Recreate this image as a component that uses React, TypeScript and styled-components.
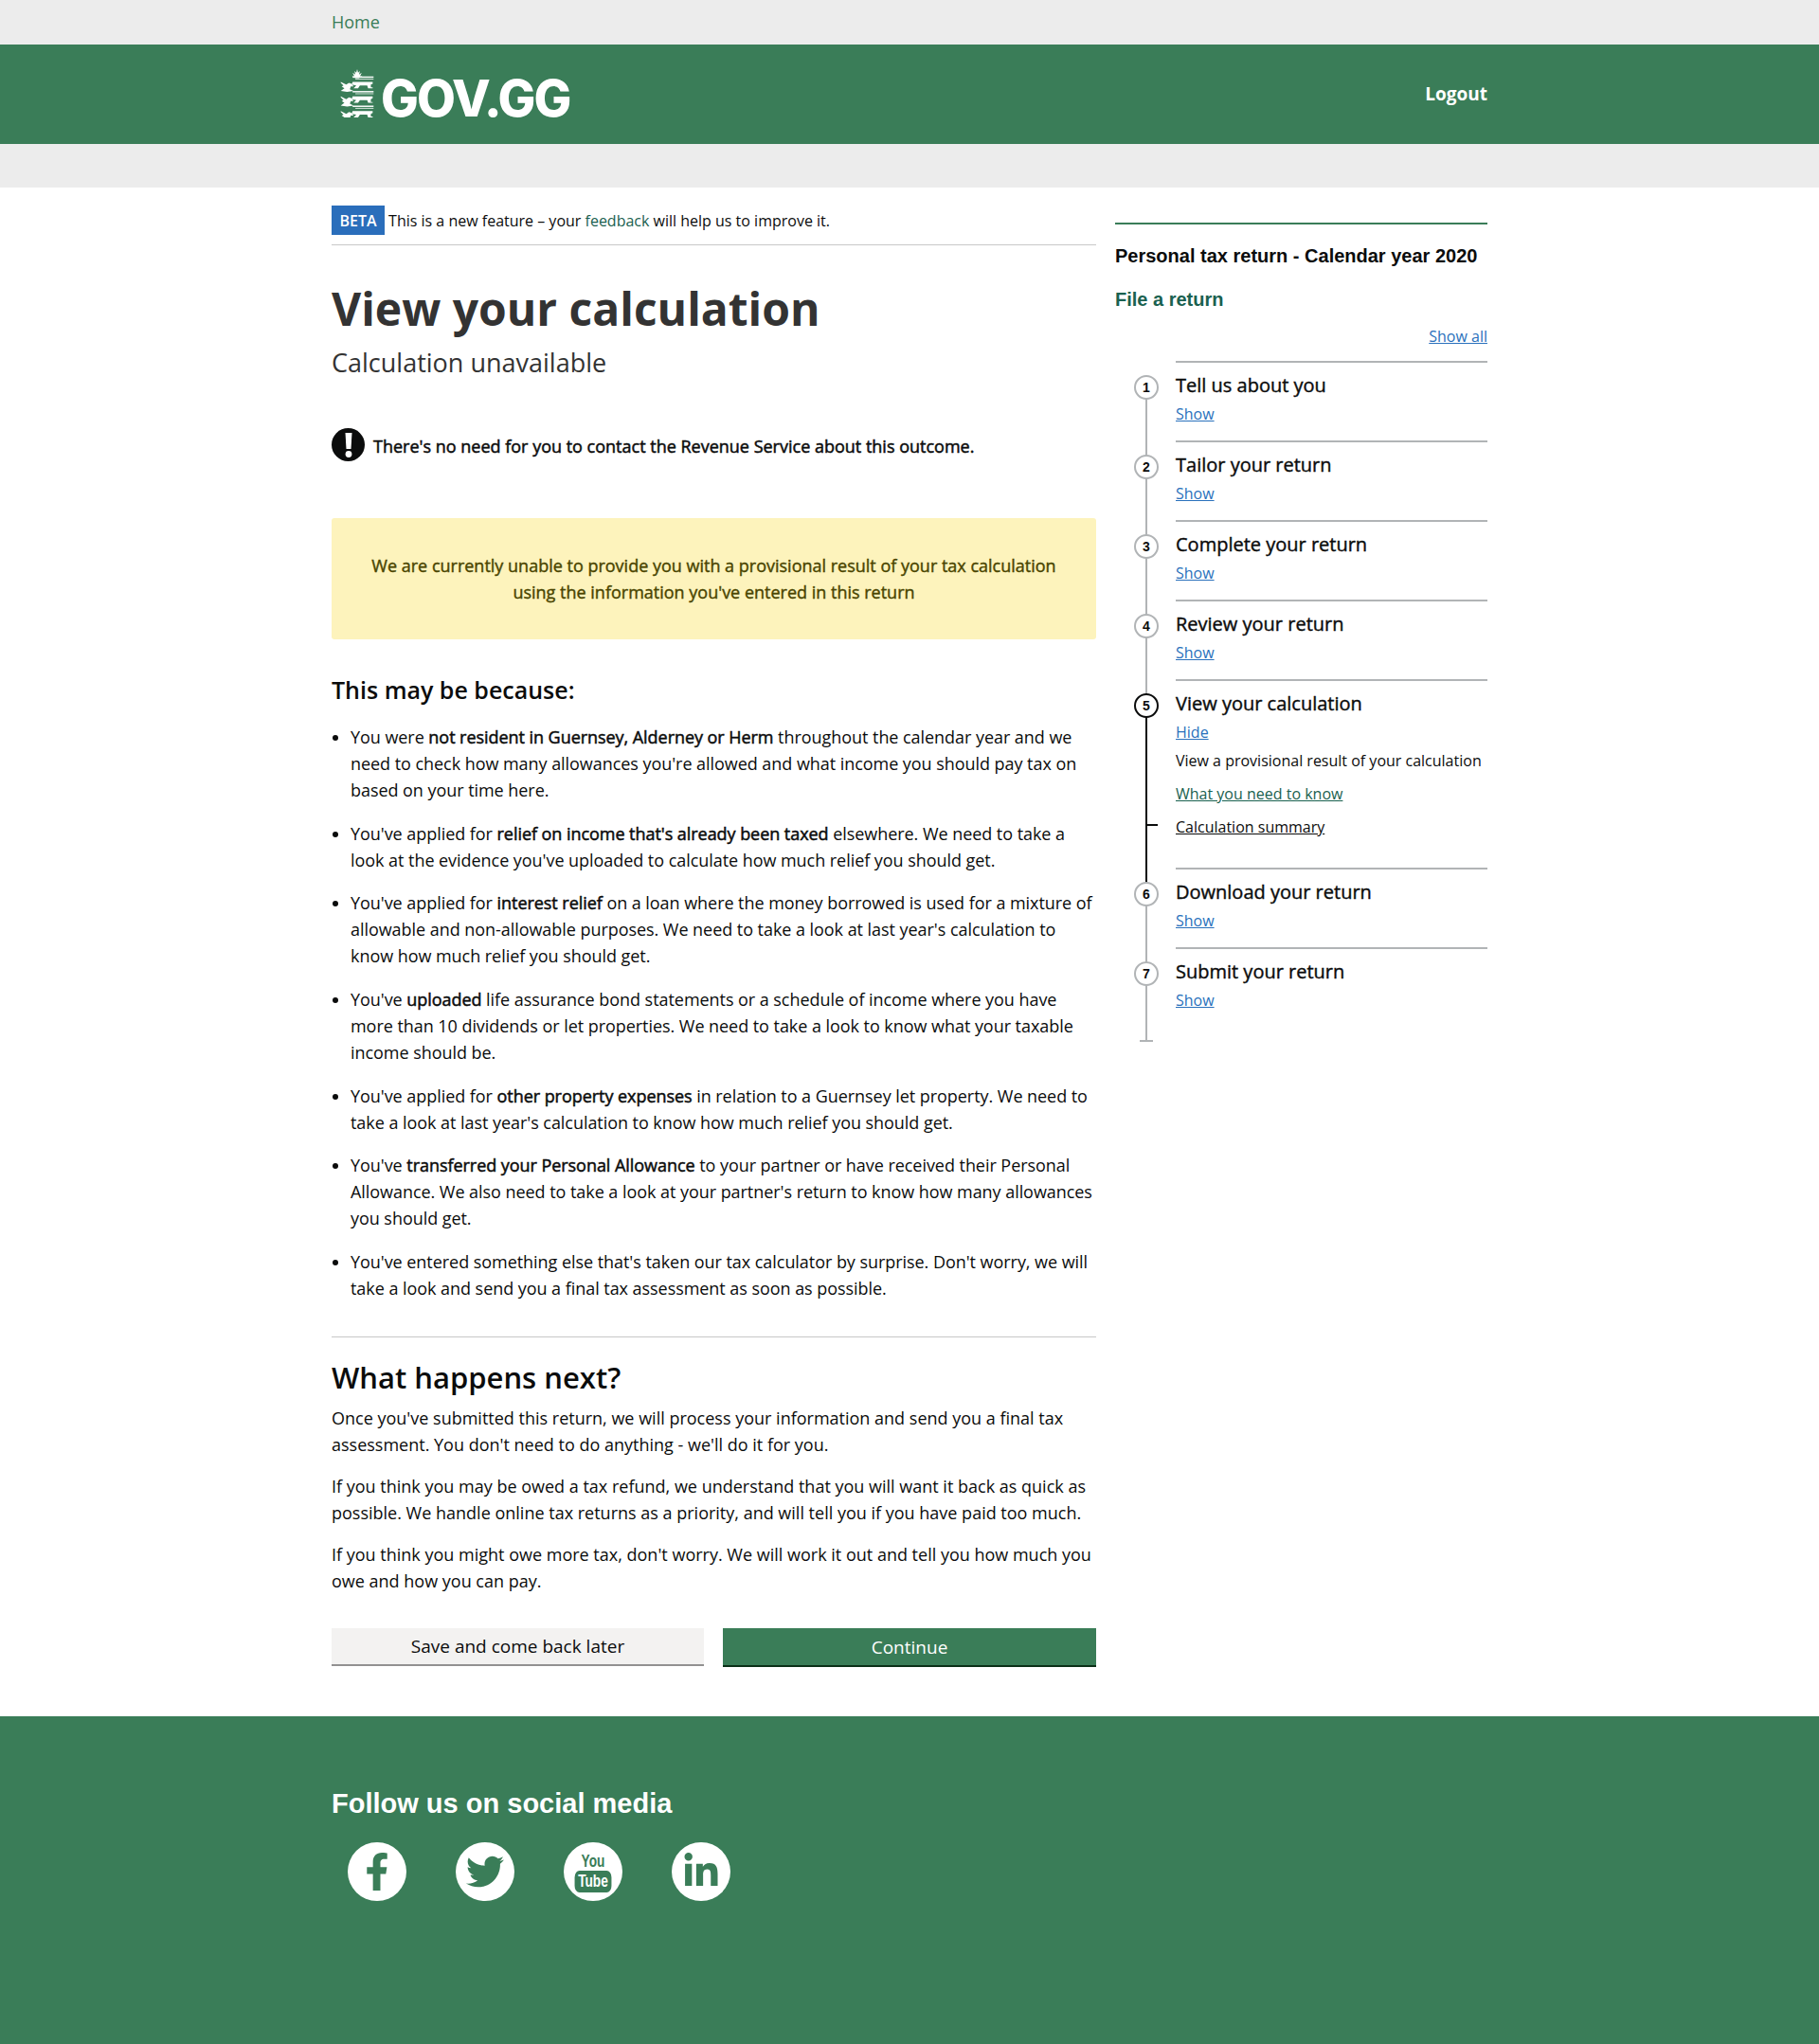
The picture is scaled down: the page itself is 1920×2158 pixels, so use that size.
import styled, { createGlobalStyle } from "styled-components";
import { FaFacebookF, FaTwitter, FaLinkedinIn } from "react-icons/fa";

const GlobalStyle = createGlobalStyle`
  * {
    box-sizing: border-box;
  }
  body {
    margin: 0;
    background: #fff;
    color: #0b0c0c;
    font-family: "Open Sans", "Liberation Sans", sans-serif;
    font-size: 18px;
    line-height: 28px;
  }
`;

const GREEN = "#3a7d58";
const LINK_BLUE = "#2a71bc";
const DARK_GREEN = "#1a6150";

const Container = styled.div`
  width: 1220px;
  margin: 0 auto;
`;

const TopBar = styled.div`
  height: 47px;
  background: #ececec;
  display: flex;
  align-items: center;
  padding-bottom: 2px;
`;

const HomeLink = styled.a`
  color: ${GREEN};
  font-size: 18px;
`;

const Masthead = styled.header`
  height: 105px;
  background: ${GREEN};
`;

const MastheadInner = styled(Container)`
  height: 100%;
  display: flex;
  justify-content: space-between;
  align-items: center;
`;

const Logo = styled.div`
  display: flex;
  align-items: flex-end;
  gap: 6px;
  padding: 0 0 3px 8px;
`;

const LogoText = styled.span`
  color: #fff;
  font-family: Inter, "Liberation Sans", sans-serif;
  font-weight: 800;
  font-size: 53px;
  line-height: 40px;
  letter-spacing: -1.8px;
`;

const Logout = styled.a`
  color: #fff;
  font-weight: 700;
  font-size: 19px;
  margin-bottom: 2px;
`;

const SubBar = styled.div`
  height: 46px;
  background: #ececec;
`;

const Layout = styled(Container)`
  display: grid;
  grid-template-columns: 807px 393px;
  gap: 20px;
  padding-top: 19px;
`;

const Main = styled.main`
  padding-bottom: 52px;
`;

const BetaBanner = styled.div`
  display: flex;
  align-items: center;
  gap: 4px;
  height: 42px;
  padding-bottom: 10px;
  border-bottom: 1px solid #c8c8c8;
  font-size: 16px;
`;

const BetaTag = styled.strong`
  background: #2a6ebb;
  color: #fff;
  font-weight: 600;
  font-size: 16px;
  line-height: 31px;
  padding: 1px 8.5px 0;
  height: 31px;
`;

const GreenLink = styled.a`
  color: ${DARK_GREEN};
`;

const Title = styled.h1`
  margin: 34px 0 0;
  color: #333;
  font-size: 48px;
  line-height: 66px;
  font-weight: 700;
`;

const Subtitle = styled.p`
  margin: 5px 0 0;
  color: #333;
  font-size: 27px;
  line-height: 38px;
`;

const Notice = styled.div`
  display: flex;
  align-items: center;
  gap: 9px;
  margin-top: 50px;
  -webkit-text-stroke: 0.5px #0b0c0c;
`;

const NoticeIcon = styled.span`
  width: 35px;
  height: 35px;
  border-radius: 50%;
  background: #0b0c0c;
  color: #fff;
  display: flex;
  align-items: center;
  justify-content: center;
  flex: none;
`;

const NoticeText = styled.span`
  position: relative;
  top: 1px;
`;

const Callout = styled.div`
  margin-top: 60px;
  padding: 36px 20px;
  background: #fdf3bc;
  color: #4a4500;
  text-align: center;
  -webkit-text-stroke: 0.4px #4a4500;
  border-radius: 3px;
`;

const SectionHeading = styled.h2`
  margin: 35px 0 0;
  font-size: 25px;
  line-height: 36px;
  font-weight: 600;
`;

const ReasonList = styled.ul`
  list-style: none;
  margin: 18px 0 0;
  padding: 0;
  padding-bottom: 37px;
  border-bottom: 1px solid #c8c8c8;
`;

const Reason = styled.li`
  position: relative;
  padding-left: 20px;
  margin-bottom: 17.7px;
  letter-spacing: -0.05px;

  &:last-child {
    margin-bottom: 0;
  }

  &::before {
    content: "";
    position: absolute;
    left: 1px;
    top: 12px;
    width: 6px;
    height: 6px;
    border-radius: 50%;
    background: #0b0c0c;
  }

  strong {
    font-weight: 400;
    -webkit-text-stroke: 0.5px #0b0c0c;
  }
`;

const NextHeading = styled.h2`
  margin: 21px 0 0;
  font-size: 31px;
  line-height: 42px;
  font-weight: 600;
`;

const Para = styled.p`
  margin: 8px 0 16px;
`;

const Actions = styled.div`
  display: grid;
  grid-template-columns: 393px 394px;
  gap: 20px;
  margin-top: 36px;
  align-items: start;
`;

const Button = styled.button<{ $primary?: boolean }>`
  height: ${(p) => (p.$primary ? "41px" : "40px")};
  border: 0;
  border-bottom: ${(p) => (p.$primary ? "2px solid #0b3018" : "2px solid #929191")};
  background: ${(p) => (p.$primary ? GREEN : "#f3f2f1")};
  color: ${(p) => (p.$primary ? "#fff" : "#0b0c0c")};
  font-family: inherit;
  font-size: 19px;
  padding: 0;
`;

const Side = styled.aside`
  padding-top: 18px;
`;

const SideHeader = styled.div`
  border-top: 2px solid ${GREEN};
  padding-top: 19px;
  font-family: "Liberation Sans", sans-serif;
  font-weight: 700;
`;

const SideTitle = styled.div`
  font-size: 20px;
  line-height: 28px;
`;

const SideSub = styled.div`
  margin-top: 18px;
  font-size: 20px;
  line-height: 28px;
  color: ${DARK_GREEN};
`;

const ShowAll = styled.a`
  display: block;
  text-align: right;
  margin-top: 13px;
  font-size: 16px;
  line-height: 24px;
  color: ${LINK_BLUE};
  text-decoration: underline;
`;

const Steps = styled.ol`
  list-style: none;
  margin: 14px 0 0;
  padding: 0 0 16px;
  position: relative;

  &::after {
    content: "";
    position: absolute;
    left: 26px;
    bottom: 0;
    width: 14px;
    height: 2px;
    background: #b1b4b6;
  }
`;

const Step = styled.li<{ $active?: boolean }>`
  position: relative;
  padding-left: 64px;

  &::before {
    content: "";
    position: absolute;
    left: 32px;
    top: ${(p) => (p.$active ? "15px" : "0")};
    bottom: -16px;
    width: 2px;
    background: ${(p) => (p.$active ? "#0b0c0c" : "#b1b4b6")};
    z-index: ${(p) => (p.$active ? 1 : 0)};
  }

  &:first-child::before {
    top: 20px;
  }
`;

const StepBody = styled.div<{ $tall?: boolean }>`
  border-top: 2px solid #b1b4b6;
  padding-top: 10px;
  height: ${(p) => (p.$tall ? "199px" : "84px")};
`;

const StepNumber = styled.span<{ $active?: boolean }>`
  position: absolute;
  left: 20px;
  top: 15px;
  z-index: 2;
  width: 26px;
  height: 26px;
  border-radius: 50%;
  border: 2px solid ${(p) => (p.$active ? "#0b0c0c" : "#b1b4b6")};
  background: #fff;
  display: flex;
  align-items: center;
  justify-content: center;
  font-family: "Liberation Sans", sans-serif;
  font-size: 14px;
  font-weight: 700;
`;

const StepTitle = styled.div`
  font-size: 20px;
  line-height: 28px;
  font-weight: 500;
  -webkit-text-stroke: 0.4px #0b0c0c;
`;

const Toggle = styled.a`
  display: block;
  margin-top: 4px;
  font-size: 16px;
  line-height: 24px;
  color: ${LINK_BLUE};
  text-decoration: underline;
`;

const StepText = styled.p`
  margin: 6px 0 0;
  font-size: 16px;
  line-height: 24px;
`;

const SubLink = styled.a<{ $current?: boolean }>`
  display: block;
  position: relative;
  margin-top: 11px;
  font-size: 16px;
  line-height: 24px;
  text-decoration: underline;
  color: ${(p) => (p.$current ? "#0b0c0c" : DARK_GREEN)};

  &::before {
    content: ${(p) => (p.$current ? '""' : "none")};
    position: absolute;
    left: -32px;
    top: 9px;
    width: 13px;
    height: 2px;
    background: #0b0c0c;
  }
`;

const Footer = styled.footer`
  height: 346px;
  background: ${GREEN};
  padding-top: 72px;
`;

const FooterHeading = styled.h2`
  margin: 0;
  color: #fff;
  font-family: "Liberation Sans", sans-serif;
  font-size: 29px;
  line-height: 40px;
  font-weight: 700;
`;

const Socials = styled.div`
  display: flex;
  gap: 52px;
  margin-top: 21px;
  padding-left: 17px;
`;

const Social = styled.a`
  width: 62px;
  height: 62px;
  border-radius: 50%;
  background: #fff;
  color: ${GREEN};
  display: flex;
  align-items: center;
  justify-content: center;
  font-size: 40px;
`;

const YouTubeMark = styled.span`
  display: flex;
  flex-direction: column;
  align-items: center;
  font-family: "Liberation Sans", sans-serif;
  font-weight: 700;
  font-size: 19px;
  line-height: 20px;
  transform: scaleX(0.72);
`;

const TubeBox = styled.span`
  background: ${GREEN};
  color: #fff;
  border-radius: 7px;
  padding: 1px 5px 2px;
  line-height: 20px;
`;

function Crest() {
  const rows = [20, 36, 52];
  return (
    <svg width="38" height="51" viewBox="0 0 38 53" fill="#fff">
      <path d="M19 0l1 4 2-2-1 4 3-2-2 4 3-1-4 3h-4l-4-3 3 1-2-4 3 2-1-4 2 2z" />
      {rows.map((y) => (
        <g key={y}>
          <path d={`M1 ${y - 6}l6 3 3-2 3 1 2 3h-3l-1 3 4 2-7 1-7-1 4-3-3-2 2-1-3-3z`} />
          <rect x="14" y={y - 12} width="23" height="1.5" />
          <rect x="17" y={y - 9.5} width="20" height="1" opacity="0.8" />
          <path d={`M14 ${y - 6}h22v2l-2 1v3h2v1h-5l-1-3h-8l-2 3h-5l3-3-5-1z`} />
        </g>
      ))}
    </svg>
  );
}

const stepsBefore = ["Tell us about you", "Tailor your return", "Complete your return", "Review your return"];
const stepsAfter = ["Download your return", "Submit your return"];

export default function App() {
  return (
    <>
      <GlobalStyle />
      <TopBar>
        <Container>
          <HomeLink>Home</HomeLink>
        </Container>
      </TopBar>
      <Masthead>
        <MastheadInner>
          <Logo>
            <Crest />
            <LogoText>GOV.GG</LogoText>
          </Logo>
          <Logout>Logout</Logout>
        </MastheadInner>
      </Masthead>
      <SubBar />
      <Layout>
        <Main>
          <BetaBanner>
            <BetaTag>BETA</BetaTag>
            <span>
              This is a new feature – your <GreenLink>feedback</GreenLink> will help us to improve it.
            </span>
          </BetaBanner>
          <Title>View your calculation</Title>
          <Subtitle>Calculation unavailable</Subtitle>
          <Notice>
            <NoticeIcon>
              <svg width="8" height="26" viewBox="0 0 8 26" fill="#fff">
                <path d="M0.5 0h7l-1 17h-5z" />
                <circle cx="4" cy="22.5" r="3.4" />
              </svg>
            </NoticeIcon>
            <NoticeText>There's no need for you to contact the Revenue Service about this outcome.</NoticeText>
          </Notice>
          <Callout>
            We are currently unable to provide you with a provisional result of your tax calculation
            <br />
            using the information you've entered in this return
          </Callout>
          <SectionHeading>This may be because:</SectionHeading>
          <ReasonList>
            <Reason>
              You were <strong>not resident in Guernsey, Alderney or Herm</strong> throughout the calendar year and we need to check how many allowances you're allowed and what income you should pay tax on based on your time here.
            </Reason>
            <Reason>
              You've applied for <strong>relief on income that's already been taxed</strong> elsewhere. We need to take a look at the evidence you've uploaded to calculate how much relief you should get.
            </Reason>
            <Reason>
              You've applied for <strong>interest relief</strong> on a loan where the money borrowed is used for a mixture of allowable and non-allowable purposes. We need to take a look at last year's calculation to know how much relief you should get.
            </Reason>
            <Reason>
              You've <strong>uploaded</strong> life assurance bond statements or a schedule of income where you have more than 10 dividends or let properties. We need to take a look to know what your taxable income should be.
            </Reason>
            <Reason>
              You've applied for <strong>other property expenses</strong> in relation to a Guernsey let property. We need to take a look at last year's calculation to know how much relief you should get.
            </Reason>
            <Reason>
              You've <strong>transferred your Personal Allowance</strong> to your partner or have received their Personal Allowance. We also need to take a look at your partner's return to know how many allowances you should get.
            </Reason>
            <Reason>
              You've entered something else that's taken our tax calculator by surprise. Don't worry, we will take a look and send you a final tax assessment as soon as possible.
            </Reason>
          </ReasonList>
          <NextHeading>What happens next?</NextHeading>
          <Para>
            Once you've submitted this return, we will process your information and send you a final tax assessment. You don't need to do anything - we'll do it for you.
          </Para>
          <Para>
            If you think you may be owed a tax refund, we understand that you will want it back as quick as possible. We handle online tax returns as a priority, and will tell you if you have paid too much.
          </Para>
          <Para>
            If you think you might owe more tax, don't worry. We will work it out and tell you how much you owe and how you can pay.
          </Para>
          <Actions>
            <Button>Save and come back later</Button>
            <Button $primary>Continue</Button>
          </Actions>
        </Main>
        <Side>
          <SideHeader>
            <SideTitle>Personal tax return - Calendar year 2020</SideTitle>
            <SideSub>File a return</SideSub>
          </SideHeader>
          <ShowAll>Show all</ShowAll>
          <Steps>
            {stepsBefore.map((title, i) => (
              <Step key={title}>
                <StepNumber>{i + 1}</StepNumber>
                <StepBody>
                  <StepTitle>{title}</StepTitle>
                  <Toggle>Show</Toggle>
                </StepBody>
              </Step>
            ))}
            <Step $active>
              <StepNumber $active>5</StepNumber>
              <StepBody $tall>
                <StepTitle>View your calculation</StepTitle>
                <Toggle>Hide</Toggle>
                <StepText>View a provisional result of your calculation</StepText>
                <SubLink>What you need to know</SubLink>
                <SubLink $current>Calculation summary</SubLink>
              </StepBody>
            </Step>
            {stepsAfter.map((title, i) => (
              <Step key={title}>
                <StepNumber>{i + 6}</StepNumber>
                <StepBody>
                  <StepTitle>{title}</StepTitle>
                  <Toggle>Show</Toggle>
                </StepBody>
              </Step>
            ))}
          </Steps>
        </Side>
      </Layout>
      <Footer>
        <Container>
          <FooterHeading>Follow us on social media</FooterHeading>
          <Socials>
            <Social>
              <FaFacebookF />
            </Social>
            <Social>
              <FaTwitter />
            </Social>
            <Social>
              <YouTubeMark>
                You
                <TubeBox>Tube</TubeBox>
              </YouTubeMark>
            </Social>
            <Social>
              <FaLinkedinIn />
            </Social>
          </Socials>
        </Container>
      </Footer>
    </>
  );
}
